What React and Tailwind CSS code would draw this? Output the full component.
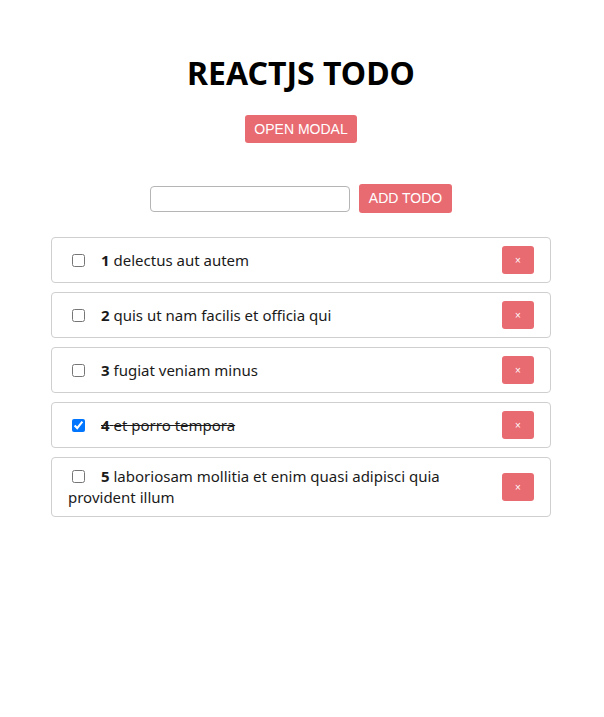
import React from "react";

const todos = [
  { id: 1, title: "delectus aut autem", done: false },
  { id: 2, title: "quis ut nam facilis et officia qui", done: false },
  { id: 3, title: "fugiat veniam minus", done: false },
  { id: 4, title: "et porro tempora", done: true },
  { id: 5, title: "laboriosam mollitia et enim quasi adipisci quia provident illum", done: false },
];

export default function App() {
  return (
    <div className="w-[602px] min-h-[717px] bg-white text-black font-['Noto_Sans',sans-serif]">
      <h1 className="pt-[53px] text-center text-[32px] font-bold leading-[40px]">REACTJS TODO</h1>
      <div className="mt-[22px] flex justify-center">
        <button className="h-[28px] w-[112px] rounded-[3px] bg-[#e96b72] text-white text-[14px] font-['Liberation_Sans',sans-serif]">
          OPEN MODAL
        </button>
      </div>
      <div className="mt-[41px] flex justify-center items-center gap-[9px]">
        <input type="text" className="h-[26px] w-[200px] rounded-[4px] border border-[#b5b5b5] bg-white" />
        <button className="h-[29px] w-[93px] rounded-[3px] bg-[#e96b72] text-white text-[14px] font-['Liberation_Sans',sans-serif]">
          ADD TODO
        </button>
      </div>
      <div className="mt-[24px] mx-auto w-[500px] flex flex-col gap-[9px]">
        {todos.map((t) => (
          <div
            key={t.id}
            className="flex items-center justify-between rounded-[4px] border border-[#cfcfcf] py-[8px] pl-[16px] pr-[16px]"
          >
            <div className="flex-1 pr-[40px] text-[15px] leading-[21px] text-[#1a1a1a]">
              <input type="checkbox" defaultChecked={t.done} className="ml-[4px] mr-[3px] align-[-1px]" />
              <span className={"ml-[13px] " + (t.done ? "line-through" : "")}>
                <b className="font-bold">{t.id}</b> {t.title}
              </span>
            </div>
            <button className="h-[28px] w-[32px] shrink-0 rounded-[3px] bg-[#e96b72] text-white text-[10px] font-['Liberation_Sans',sans-serif]">
              ×
            </button>
          </div>
        ))}
      </div>
    </div>
  );
}
